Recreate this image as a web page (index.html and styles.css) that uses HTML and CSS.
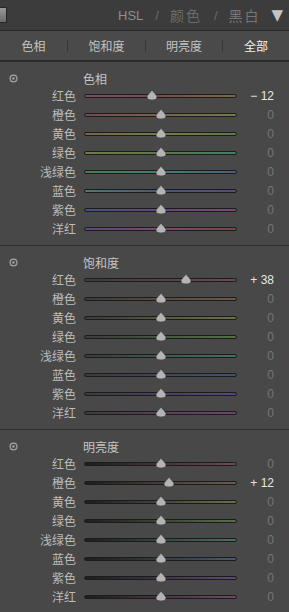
FILE: index.html
```html
<!DOCTYPE html>
<html>
<head>
    <link rel="stylesheet" href="styles.css">
</head>
<body>

    <div class="topbar">
        <div class="grip"></div>
        <div class="modes">
            <span class="mode active">HSL</span>
            <span class="slash">/</span>
            <span class="mode cjk">颜色</span>
            <span class="slash">/</span>
            <span class="mode cjk dim">黑白</span>
            <span class="arrow">▼</span>
        </div>
    </div>

    <div class="tabs">
        <div class="tab">色相</div>
        <div class="tab">饱和度</div>
        <div class="tab">明亮度</div>
        <div class="tab current">全部</div>
    </div>

    <div class="section hue">
        <div class="section-head">
            <svg class="target" width="9" height="9" viewBox="0 0 9 9"><circle cx="4.5" cy="4.5" r="3.4" fill="none" stroke="#a3a3a3" stroke-width="1.2"/><circle cx="4.5" cy="4.5" r="1.2" fill="#a3a3a3"/></svg>
            <span class="title">色相</span>
        </div>
        <div class="row"><span class="label">红色</span><div class="track red"><svg class="thumb" style="left: 44.5%" width="11" height="10" viewBox="0 0 11 10"><path d="M5.5 0 C6.5 2 10.5 5 10.5 7 C10.5 9 8.5 10 5.5 10 C2.5 10 0.5 9 0.5 7 C0.5 5 4.5 2 5.5 0 Z"/></svg></div><span class="value set">− 12</span></div>
        <div class="row"><span class="label">橙色</span><div class="track orange"><svg class="thumb" style="left: 50%" width="11" height="10" viewBox="0 0 11 10"><path d="M5.5 0 C6.5 2 10.5 5 10.5 7 C10.5 9 8.5 10 5.5 10 C2.5 10 0.5 9 0.5 7 C0.5 5 4.5 2 5.5 0 Z"/></svg></div><span class="value">0</span></div>
        <div class="row"><span class="label">黄色</span><div class="track yellow"><svg class="thumb" style="left: 50%" width="11" height="10" viewBox="0 0 11 10"><path d="M5.5 0 C6.5 2 10.5 5 10.5 7 C10.5 9 8.5 10 5.5 10 C2.5 10 0.5 9 0.5 7 C0.5 5 4.5 2 5.5 0 Z"/></svg></div><span class="value">0</span></div>
        <div class="row"><span class="label">绿色</span><div class="track green"><svg class="thumb" style="left: 50%" width="11" height="10" viewBox="0 0 11 10"><path d="M5.5 0 C6.5 2 10.5 5 10.5 7 C10.5 9 8.5 10 5.5 10 C2.5 10 0.5 9 0.5 7 C0.5 5 4.5 2 5.5 0 Z"/></svg></div><span class="value">0</span></div>
        <div class="row"><span class="label">浅绿色</span><div class="track aqua"><svg class="thumb" style="left: 50%" width="11" height="10" viewBox="0 0 11 10"><path d="M5.5 0 C6.5 2 10.5 5 10.5 7 C10.5 9 8.5 10 5.5 10 C2.5 10 0.5 9 0.5 7 C0.5 5 4.5 2 5.5 0 Z"/></svg></div><span class="value">0</span></div>
        <div class="row"><span class="label">蓝色</span><div class="track blue"><svg class="thumb" style="left: 50%" width="11" height="10" viewBox="0 0 11 10"><path d="M5.5 0 C6.5 2 10.5 5 10.5 7 C10.5 9 8.5 10 5.5 10 C2.5 10 0.5 9 0.5 7 C0.5 5 4.5 2 5.5 0 Z"/></svg></div><span class="value">0</span></div>
        <div class="row"><span class="label">紫色</span><div class="track purple"><svg class="thumb" style="left: 50%" width="11" height="10" viewBox="0 0 11 10"><path d="M5.5 0 C6.5 2 10.5 5 10.5 7 C10.5 9 8.5 10 5.5 10 C2.5 10 0.5 9 0.5 7 C0.5 5 4.5 2 5.5 0 Z"/></svg></div><span class="value">0</span></div>
        <div class="row"><span class="label">洋红</span><div class="track magenta"><svg class="thumb" style="left: 50%" width="11" height="10" viewBox="0 0 11 10"><path d="M5.5 0 C6.5 2 10.5 5 10.5 7 C10.5 9 8.5 10 5.5 10 C2.5 10 0.5 9 0.5 7 C0.5 5 4.5 2 5.5 0 Z"/></svg></div><span class="value">0</span></div>
    </div>

    <div class="section sat">
        <div class="section-head">
            <svg class="target" width="9" height="9" viewBox="0 0 9 9"><circle cx="4.5" cy="4.5" r="3.4" fill="none" stroke="#a3a3a3" stroke-width="1.2"/><circle cx="4.5" cy="4.5" r="1.2" fill="#a3a3a3"/></svg>
            <span class="title">饱和度</span>
        </div>
        <div class="row"><span class="label">红色</span><div class="track red"><svg class="thumb" style="left: 67%" width="11" height="10" viewBox="0 0 11 10"><path d="M5.5 0 C6.5 2 10.5 5 10.5 7 C10.5 9 8.5 10 5.5 10 C2.5 10 0.5 9 0.5 7 C0.5 5 4.5 2 5.5 0 Z"/></svg></div><span class="value set">+ 38</span></div>
        <div class="row"><span class="label">橙色</span><div class="track orange"><svg class="thumb" style="left: 50%" width="11" height="10" viewBox="0 0 11 10"><path d="M5.5 0 C6.5 2 10.5 5 10.5 7 C10.5 9 8.5 10 5.5 10 C2.5 10 0.5 9 0.5 7 C0.5 5 4.5 2 5.5 0 Z"/></svg></div><span class="value">0</span></div>
        <div class="row"><span class="label">黄色</span><div class="track yellow"><svg class="thumb" style="left: 50%" width="11" height="10" viewBox="0 0 11 10"><path d="M5.5 0 C6.5 2 10.5 5 10.5 7 C10.5 9 8.5 10 5.5 10 C2.5 10 0.5 9 0.5 7 C0.5 5 4.5 2 5.5 0 Z"/></svg></div><span class="value">0</span></div>
        <div class="row"><span class="label">绿色</span><div class="track green"><svg class="thumb" style="left: 50%" width="11" height="10" viewBox="0 0 11 10"><path d="M5.5 0 C6.5 2 10.5 5 10.5 7 C10.5 9 8.5 10 5.5 10 C2.5 10 0.5 9 0.5 7 C0.5 5 4.5 2 5.5 0 Z"/></svg></div><span class="value">0</span></div>
        <div class="row"><span class="label">浅绿色</span><div class="track aqua"><svg class="thumb" style="left: 50%" width="11" height="10" viewBox="0 0 11 10"><path d="M5.5 0 C6.5 2 10.5 5 10.5 7 C10.5 9 8.5 10 5.5 10 C2.5 10 0.5 9 0.5 7 C0.5 5 4.5 2 5.5 0 Z"/></svg></div><span class="value">0</span></div>
        <div class="row"><span class="label">蓝色</span><div class="track blue"><svg class="thumb" style="left: 50%" width="11" height="10" viewBox="0 0 11 10"><path d="M5.5 0 C6.5 2 10.5 5 10.5 7 C10.5 9 8.5 10 5.5 10 C2.5 10 0.5 9 0.5 7 C0.5 5 4.5 2 5.5 0 Z"/></svg></div><span class="value">0</span></div>
        <div class="row"><span class="label">紫色</span><div class="track purple"><svg class="thumb" style="left: 50%" width="11" height="10" viewBox="0 0 11 10"><path d="M5.5 0 C6.5 2 10.5 5 10.5 7 C10.5 9 8.5 10 5.5 10 C2.5 10 0.5 9 0.5 7 C0.5 5 4.5 2 5.5 0 Z"/></svg></div><span class="value">0</span></div>
        <div class="row"><span class="label">洋红</span><div class="track magenta"><svg class="thumb" style="left: 50%" width="11" height="10" viewBox="0 0 11 10"><path d="M5.5 0 C6.5 2 10.5 5 10.5 7 C10.5 9 8.5 10 5.5 10 C2.5 10 0.5 9 0.5 7 C0.5 5 4.5 2 5.5 0 Z"/></svg></div><span class="value">0</span></div>
    </div>

    <div class="section lum">
        <div class="section-head">
            <svg class="target" width="9" height="9" viewBox="0 0 9 9"><circle cx="4.5" cy="4.5" r="3.4" fill="none" stroke="#a3a3a3" stroke-width="1.2"/><circle cx="4.5" cy="4.5" r="1.2" fill="#a3a3a3"/></svg>
            <span class="title">明亮度</span>
        </div>
        <div class="row"><span class="label">红色</span><div class="track red"><svg class="thumb" style="left: 50%" width="11" height="10" viewBox="0 0 11 10"><path d="M5.5 0 C6.5 2 10.5 5 10.5 7 C10.5 9 8.5 10 5.5 10 C2.5 10 0.5 9 0.5 7 C0.5 5 4.5 2 5.5 0 Z"/></svg></div><span class="value">0</span></div>
        <div class="row"><span class="label">橙色</span><div class="track orange"><svg class="thumb" style="left: 55.5%" width="11" height="10" viewBox="0 0 11 10"><path d="M5.5 0 C6.5 2 10.5 5 10.5 7 C10.5 9 8.5 10 5.5 10 C2.5 10 0.5 9 0.5 7 C0.5 5 4.5 2 5.5 0 Z"/></svg></div><span class="value set">+ 12</span></div>
        <div class="row"><span class="label">黄色</span><div class="track yellow"><svg class="thumb" style="left: 50%" width="11" height="10" viewBox="0 0 11 10"><path d="M5.5 0 C6.5 2 10.5 5 10.5 7 C10.5 9 8.5 10 5.5 10 C2.5 10 0.5 9 0.5 7 C0.5 5 4.5 2 5.5 0 Z"/></svg></div><span class="value">0</span></div>
        <div class="row"><span class="label">绿色</span><div class="track green"><svg class="thumb" style="left: 50%" width="11" height="10" viewBox="0 0 11 10"><path d="M5.5 0 C6.5 2 10.5 5 10.5 7 C10.5 9 8.5 10 5.5 10 C2.5 10 0.5 9 0.5 7 C0.5 5 4.5 2 5.5 0 Z"/></svg></div><span class="value">0</span></div>
        <div class="row"><span class="label">浅绿色</span><div class="track aqua"><svg class="thumb" style="left: 50%" width="11" height="10" viewBox="0 0 11 10"><path d="M5.5 0 C6.5 2 10.5 5 10.5 7 C10.5 9 8.5 10 5.5 10 C2.5 10 0.5 9 0.5 7 C0.5 5 4.5 2 5.5 0 Z"/></svg></div><span class="value">0</span></div>
        <div class="row"><span class="label">蓝色</span><div class="track blue"><svg class="thumb" style="left: 50%" width="11" height="10" viewBox="0 0 11 10"><path d="M5.5 0 C6.5 2 10.5 5 10.5 7 C10.5 9 8.5 10 5.5 10 C2.5 10 0.5 9 0.5 7 C0.5 5 4.5 2 5.5 0 Z"/></svg></div><span class="value">0</span></div>
        <div class="row"><span class="label">紫色</span><div class="track purple"><svg class="thumb" style="left: 50%" width="11" height="10" viewBox="0 0 11 10"><path d="M5.5 0 C6.5 2 10.5 5 10.5 7 C10.5 9 8.5 10 5.5 10 C2.5 10 0.5 9 0.5 7 C0.5 5 4.5 2 5.5 0 Z"/></svg></div><span class="value">0</span></div>
        <div class="row"><span class="label">洋红</span><div class="track magenta"><svg class="thumb" style="left: 50%" width="11" height="10" viewBox="0 0 11 10"><path d="M5.5 0 C6.5 2 10.5 5 10.5 7 C10.5 9 8.5 10 5.5 10 C2.5 10 0.5 9 0.5 7 C0.5 5 4.5 2 5.5 0 Z"/></svg></div><span class="value">0</span></div>
    </div>

</body>
</html>
```
FILE: styles.css
```css
body {
    margin: 0;
    width: 289px;
    overflow: hidden;
    background-color: #484848;
    font-family: "Noto Sans CJK SC", "Liberation Sans", sans-serif;
    color: #bdbdbd;
}
.topbar {
    height: 30px;
    background-color: #3c3c3c;
    border-bottom: 1px solid #2a2a2a;
    display: flex;
    align-items: center;
}
.grip {
    width: 6px;
    height: 14px;
    background: linear-gradient(#9a9a9a, #6a6a6a);
    border: 1px solid #262626;
    border-left: none;
}
.modes {
    display: flex;
    align-items: center;
    margin-left: 111px;
    white-space: nowrap;
}
.mode {
    font-family: "Liberation Sans", sans-serif;
    font-size: 13px;
    color: #8e8e8e;
}
.mode.cjk {
    font-family: "Noto Sans CJK SC", sans-serif;
    font-size: 14px;
    letter-spacing: 2px;
    color: #6c6c6c;
}
.mode.dim {
    color: #767676;
}
.slash {
    font-family: "Liberation Sans", sans-serif;
    font-size: 13px;
    color: #6a6a6a;
    margin: 0 11px 0 12px;
}
.arrow {
    font-family: "DejaVu Sans", sans-serif;
    font-size: 15px;
    color: #c4c4c4;
    margin-left: 11px;
}
.tabs {
    display: grid;
    grid-template-columns: 67px 78px 77px 1fr;
    height: 29px;
    align-items: center;
    background-color: #4a4a4a;
    border-bottom: 1px solid #2a2a2a;
}
.tab {
    text-align: center;
    font-size: 12px;
    color: #c2c2c2;
    border-left: 1px solid #383838;
    line-height: 12px;
}
.tab:first-child {
    border-left: none;
}
.tab.current {
    color: #f2f2f2;
}
.section {
    padding: 8px 0 7px 0;
    border-top: 1px solid #2f2f2f;
}
.section:first-of-type {
    border-top: none;
}
.section-head {
    height: 16px;
    display: flex;
    align-items: center;
    font-size: 12px;
    color: #c4c4c4;
}
.target {
    margin-left: 9px;
}
.title {
    margin-left: 65px;
}
.row {
    display: grid;
    grid-template-columns: 76px 153px 29px;
    column-gap: 8px;
    height: 19px;
    align-items: center;
}
.label {
    text-align: right;
    font-size: 12px;
    color: #bcbcbc;
}
.value {
    text-align: right;
    font-family: "Liberation Sans", sans-serif;
    font-size: 12px;
    color: #767676;
    white-space: nowrap;
}
.value.set {
    color: #e6e6e6;
}
.track {
    position: relative;
    height: 2px;
    border: 1px solid #1c1c1c;
    border-radius: 3px;
}
.thumb {
    position: absolute;
    top: -5px;
    transform: translateX(-50%);
}
.thumb path {
    fill: #b4b4b4;
    stroke: #3a3a3a;
    stroke-width: 0.6;
}

/* hue: each color shifts toward its neighbours */
.hue .red { background: linear-gradient(to right, #7a4a6a, #7c4848, #7a6a48); }
.hue .orange { background: linear-gradient(to right, #7c4848, #7a6448, #747a48); }
.hue .yellow { background: linear-gradient(to right, #7a6448, #787a48, #5a7a48); }
.hue .green { background: linear-gradient(to right, #707a48, #5a7a48, #487a66); }
.hue .aqua { background: linear-gradient(to right, #4a7a50, #487a70, #486078); }
.hue .blue { background: linear-gradient(to right, #487a78, #48587a, #5a487a); }
.hue .purple { background: linear-gradient(to right, #48507a, #60487a, #7a4870); }
.hue .magenta { background: linear-gradient(to right, #5e487a, #7a4870, #7a4848); }

/* saturation: gray to color */
.sat .red { background: linear-gradient(to right, #3c3c3c, #6a4a52); }
.sat .orange { background: linear-gradient(to right, #3c3c3c, #6e5a44); }
.sat .yellow { background: linear-gradient(to right, #3c3c3c, #6e7044); }
.sat .green { background: linear-gradient(to right, #3c3c3c, #507044); }
.sat .aqua { background: linear-gradient(to right, #3c3c3c, #44705e); }
.sat .blue { background: linear-gradient(to right, #3c3c3c, #44507a); }
.sat .purple { background: linear-gradient(to right, #3c3c3c, #5c447a); }
.sat .magenta { background: linear-gradient(to right, #3c3c3c, #70446a); }

/* luminance: dark to color */
.lum .red { background: linear-gradient(to right, #1e1e1e, #6e4a52); }
.lum .orange { background: linear-gradient(to right, #1e1e1e, #6e5c48); }
.lum .yellow { background: linear-gradient(to right, #1e1e1e, #6c6e4a); }
.lum .green { background: linear-gradient(to right, #1e1e1e, #566e4a); }
.lum .aqua { background: linear-gradient(to right, #1e1e1e, #4a6e62); }
.lum .blue { background: linear-gradient(to right, #1e1e1e, #4a5872); }
.lum .purple { background: linear-gradient(to right, #1e1e1e, #5e4a72); }
.lum .magenta { background: linear-gradient(to right, #1e1e1e, #6e4a64); }
```
